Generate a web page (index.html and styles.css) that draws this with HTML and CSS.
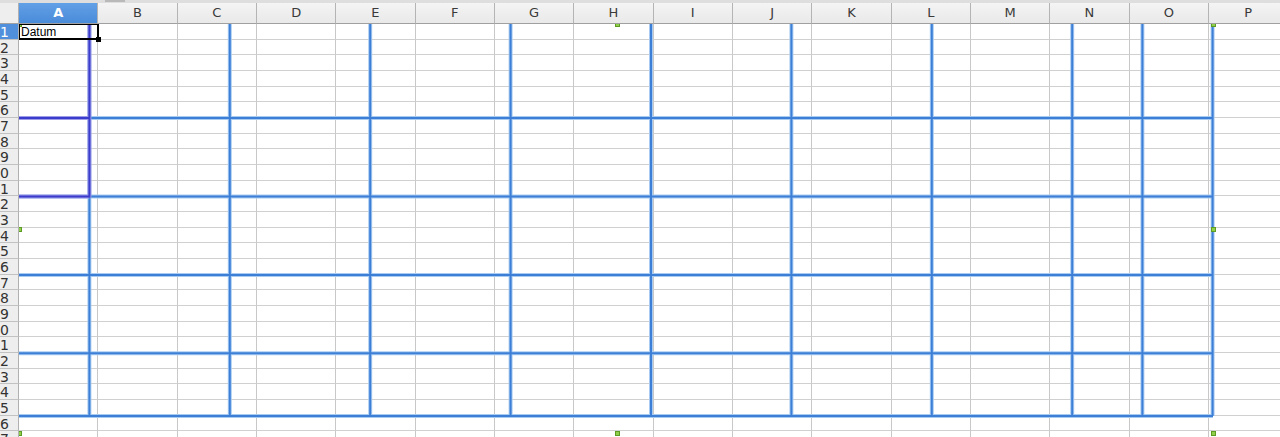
FILE: index.html
```html
<!DOCTYPE html>
<html lang="de">
<head>
  <meta charset="UTF-8">
  <title>Tabelle1</title>
  <link rel="stylesheet" href="styles.css">
</head>
<body>
  <div class="toolstrip"><span class="tab-edge"></span></div>

  <div class="sheet">
    <div class="corner"></div>
    <div class="col-heads" id="colHeads"></div>
    <div class="row-heads" id="rowHeads"></div>

    <div class="cells" id="cells">
      <!-- table frame drawn over the grid -->
      <svg class="frame" width="1261" height="413">
        <g class="lines-light">
          <line x1="0" y1="94.08" x2="1194" y2="94.08"/>
          <line x1="0" y1="172.48" x2="1194" y2="172.48"/>
          <line x1="0" y1="250.88" x2="1194" y2="250.88"/>
          <line x1="0" y1="329.28" x2="1194" y2="329.28"/>
          <line x1="0" y1="392" x2="1194" y2="392"/>
          <line x1="70.4" y1="0" x2="70.4" y2="392"/>
          <line x1="210.8" y1="0" x2="210.8" y2="392"/>
          <line x1="351.2" y1="0" x2="351.2" y2="392"/>
          <line x1="491.6" y1="0" x2="491.6" y2="392"/>
          <line x1="632" y1="0" x2="632" y2="392"/>
          <line x1="772.4" y1="0" x2="772.4" y2="392"/>
          <line x1="912.8" y1="0" x2="912.8" y2="392"/>
          <line x1="1053.2" y1="0" x2="1053.2" y2="392"/>
          <line x1="1123.4" y1="0" x2="1123.4" y2="392"/>
          <line x1="1193.6" y1="0" x2="1193.6" y2="392"/>
        </g>
        <g class="lines-dark">
          <line x1="0" y1="94.08" x2="1194" y2="94.08"/>
          <line x1="0" y1="172.48" x2="1194" y2="172.48"/>
          <line x1="0" y1="250.88" x2="1194" y2="250.88"/>
          <line x1="0" y1="329.28" x2="1194" y2="329.28"/>
          <line x1="0" y1="392" x2="1194" y2="392"/>
          <line x1="70.4" y1="0" x2="70.4" y2="392"/>
          <line x1="210.8" y1="0" x2="210.8" y2="392"/>
          <line x1="351.2" y1="0" x2="351.2" y2="392"/>
          <line x1="491.6" y1="0" x2="491.6" y2="392"/>
          <line x1="632" y1="0" x2="632" y2="392"/>
          <line x1="772.4" y1="0" x2="772.4" y2="392"/>
          <line x1="912.8" y1="0" x2="912.8" y2="392"/>
          <line x1="1053.2" y1="0" x2="1053.2" y2="392"/>
          <line x1="1123.4" y1="0" x2="1123.4" y2="392"/>
          <line x1="1193.6" y1="0" x2="1193.6" y2="392"/>
        </g>
        <!-- selected range A1:A11 -->
        <g class="sel-light">
          <line x1="70.4" y1="0" x2="70.4" y2="173.5"/>
          <line x1="0" y1="94.08" x2="70.4" y2="94.08"/>
          <line x1="0" y1="172.48" x2="70.4" y2="172.48"/>
        </g>
        <g class="sel-dark">
          <line x1="70.4" y1="0" x2="70.4" y2="173.5"/>
          <line x1="0" y1="94.08" x2="70.4" y2="94.08"/>
          <line x1="0" y1="172.48" x2="70.4" y2="172.48"/>
        </g>
      </svg>

      <span class="handle" style="left: -2px; top: -2px"></span>
      <span class="handle" style="left: 596px; top: -2px"></span>
      <span class="handle" style="left: 1192px; top: -2px"></span>
      <span class="handle" style="left: -2px; top: 203px"></span>
      <span class="handle" style="left: 1192px; top: 203px"></span>
      <span class="handle" style="left: -2px; top: 407px"></span>
      <span class="handle" style="left: 596px; top: 407px"></span>
      <span class="handle" style="left: 1192px; top: 407px"></span>

      <div class="cell-cursor"><span class="fill-handle"></span></div>
    </div>
  </div>

  <script>
    // Build headers and grid
    const columns = 'ABCDEFGHIJKLMNOP'.split('');
    const rowCount = 27;
    const colHeads = document.getElementById('colHeads');
    const rowHeads = document.getElementById('rowHeads');
    const cells = document.getElementById('cells');

    columns.forEach((name, i) => {
      const head = document.createElement('div');
      head.className = i === 0 ? 'col-head active' : 'col-head';
      head.textContent = name;
      colHeads.appendChild(head);
    });

    for (let r = 1; r <= rowCount; r++) {
      const head = document.createElement('div');
      head.className = r === 1 ? 'row-head active' : 'row-head';
      head.innerHTML = `<span>${r}</span>`;
      rowHeads.appendChild(head);

      columns.forEach((name, c) => {
        const cell = document.createElement('div');
        cell.className = 'cell';
        if (r === 1 && c === 0) cell.textContent = 'Datum';
        cells.appendChild(cell);
      });
    }
  </script>
</body>
</html>
```

FILE: styles.css
```css
body {
  margin: 0;
  background-color: #ffffff;
  font-family: 'DejaVu Sans', sans-serif;
  overflow: hidden;
}
.toolstrip {
  height: 3px;
  background-color: #dedede;
}
.tab-edge {
  display: block;
  margin-left: 105px;
  width: 20px;
  height: 2px;
  background-color: #b9b9b9;
}
.sheet {
  display: grid;
  grid-template-columns: 19px 1fr;
  grid-template-rows: 21px 413px;
}
.corner {
  background-color: #eeeeee;
  border-right: 1px solid #b0b0b0;
  border-bottom: 1px solid #a0a0a0;
  box-sizing: border-box;
}
.col-heads {
  display: grid;
  grid-template-columns: repeat(16, 79.33px);
  overflow: hidden;
}
.col-head {
  box-sizing: border-box;
  background: linear-gradient(#f4f4f4, #e9e9e9);
  border-right: 1px solid #b4b4b4;
  border-bottom: 1px solid #a0a0a0;
  color: #3a3a3a;
  font-size: 13px;
  line-height: 20px;
  text-align: center;
}
.col-head.active {
  background: linear-gradient(#62a0e6, #4a8bd9);
  color: #ffffff;
  font-weight: bold;
}
.row-heads {
  display: grid;
  grid-auto-rows: 15.68px;
  overflow: hidden;
}
.row-head {
  box-sizing: border-box;
  display: flex;
  justify-content: flex-end;
  overflow: hidden;
  padding-right: 9px;
  background-color: #eeeeee;
  border-right: 1px solid #b0b0b0;
  border-bottom: 1px solid #c2c2c2;
  color: #333333;
  font-size: 14px;
  line-height: 17px;
  white-space: nowrap;
}
.row-head.active {
  background-color: #4f8fdb;
  color: #ffffff;
}
.cells {
  position: relative;
  display: grid;
  grid-template-columns: repeat(16, 79.33px);
  grid-auto-rows: 15.68px;
  overflow: hidden;
}
.cell {
  box-sizing: border-box;
  border-right: 1px solid #c8c8c8;
  border-bottom: 1px solid #d0d0d0;
  padding: 0 2px;
  font-family: 'Liberation Sans', Arial, sans-serif;
  font-size: 12px;
  line-height: 17px;
  color: #000000;
  white-space: nowrap;
}
.frame {
  position: absolute;
  left: 0;
  top: 0;
  pointer-events: none;
}
.lines-light line {
  stroke: #a8cbf2;
  stroke-width: 4;
}
.lines-dark line {
  stroke: #3d7fd6;
  stroke-width: 2;
}
.sel-light line {
  stroke: #9c9ce8;
  stroke-width: 4;
}
.sel-dark line {
  stroke: #3b3bcc;
  stroke-width: 2;
}
.handle {
  position: absolute;
  width: 5px;
  height: 5px;
  box-sizing: border-box;
  background-color: #8fcf4a;
  border: 1px solid #5c9c24;
}
.cell-cursor {
  position: absolute;
  left: 0;
  top: 0;
  width: 80px;
  height: 16px;
  box-sizing: border-box;
  border: 1px solid #000000;
  border-right-width: 2px;
  border-bottom-width: 2px;
}
.fill-handle {
  position: absolute;
  right: -4px;
  bottom: -4px;
  width: 5px;
  height: 5px;
  background-color: #000000;
}
```
